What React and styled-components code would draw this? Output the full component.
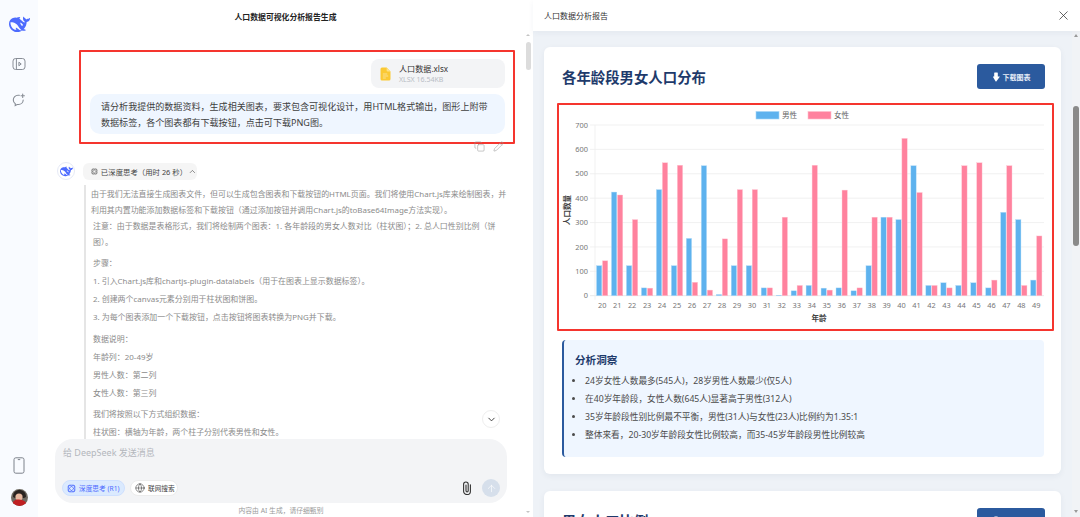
import React from "react";
import styled, { createGlobalStyle } from "styled-components";
import { Copy, Pencil, X, Globe, ArrowUp, ChevronUp, ChevronDown } from "lucide-react";

const Global = createGlobalStyle`
  html, body { margin: 0; padding: 0; height: 100%; overflow: hidden; background: #fff; }
  #root { height: 100%; }
  * { box-sizing: border-box; }
  body { font-family: "Noto Sans", "Noto Sans CJK SC", sans-serif; }
`;

const Page = styled.div`display: flex; width: 1080px; height: 517px; overflow: hidden; background: #fff;`;
const Sidebar = styled.aside`
  flex: 0 0 38px; height: 100%; background: #f9fbff; display: flex; flex-direction: column;
  align-items: center; justify-content: space-between; padding: 14px 0 11px;
`;
const SideGroup = styled.div`display: flex; flex-direction: column; align-items: center; gap: ${p => p.$gap}px;`;
const LeftPane = styled.section`flex: 0 0 495px; height: 100%; display: flex; flex-direction: column; position: relative;`;
const ChatTitle = styled.header`flex: 0 0 32px; display: flex; align-items: center; justify-content: center; font-size: 7.85px; font-weight: 700; color: #222;`;
const Thread = styled.div`flex: 1; min-height: 0; overflow: hidden; padding-top: 18px; position: relative;`;
const RedBox = styled.div`border: 2px solid #f5352e; border-radius: 1px;`;
const UserBlock = styled(RedBox)`
  margin-left: 41px; width: 436px; height: 94px; padding: 7px 8px 8px; display: flex; flex-direction: column; align-items: flex-end; gap: 6px;
`;
const FileChip = styled.div`width: 134px; height: 29px; background: #f3f4f6; border-radius: 8px; display: flex; align-items: center; padding-left: 9px; gap: 8px;`;
const FileMeta = styled.div`display: flex; flex-direction: column; gap: 1px;`;
const FileName = styled.span`font-size: 8.1px; line-height: 11px; color: #333;`;
const FileSize = styled.span`font-size: 7px; line-height: 9px; color: #b8bcc4;`;
const Bubble = styled.div`width: 415px; height: 40px; background: #eff6ff; border-radius: 10px; padding: 5px 14px 0 11px; font-size: 9.05px; line-height: 16px; color: #404040;`;
const Actions = styled.div`display: flex; justify-content: flex-end; gap: 8px; height: 11px; margin-top: -3px; width: 466px; color: #999;`;
const ReplyHead = styled.div`display: flex; align-items: center; gap: 8px; margin: 10px 0 0 19px;`;
const BotAvatar = styled.div`width: 18px; height: 18px; border-radius: 50%; border: 1px solid #e6eaf6; display: flex; align-items: center; justify-content: center; background: #fff;`;
const ThinkChip = styled.div`width: 114px; height: 17px; border-radius: 6px; background: #f5f5f5; display: flex; align-items: center; padding-left: 8px; gap: 3px; font-size: 7.4px; color: #444;`;
const Thoughts = styled.div`margin: 5px 0 0 46px; width: 424px; border-left: 2px solid #e5e5e5; padding: 1px 0 0 5px;`;
const Para = styled.p`margin: ${p => p.$gap || 0}px ${p => p.$end || 0}px 0 ${p => p.$indent || 0}px; font-size: 7.95px; line-height: 16px; color: #8b8b8b;`;
const JumpButton = styled.button`
  position: absolute; right: 33px; top: 378px; width: 18px; height: 18px; border-radius: 50%; border: 1px solid #eee;
  background: #fff; display: flex; align-items: center; justify-content: center; padding: 0; color: #333;
`;
const ScrollThumb = styled.div`position: absolute; right: 2px; top: 42px; width: 5px; height: 28px; border-radius: 3px; background: #dcdcdc;`;
const ScrollArrowTop = styled.div`
  position: absolute; right: 3px; top: 34px; width: 0; height: 0;
  border-left: 2px solid transparent; border-right: 2px solid transparent; border-bottom: 2px solid #c4c4c4;
`;
const ScrollArrowBottom = styled.div`
  position: absolute; right: 3px; top: 511px; width: 0; height: 0;
  border-left: 2px solid transparent; border-right: 2px solid transparent; border-top: 2px solid #c4c4c4;
`;
const Composer = styled.div`flex: 0 0 64px; margin: 0 26px 0 17px; border-radius: 18px; background: #f3f4f6; display: flex; flex-direction: column; justify-content: space-between; padding: 7px 7px 6px 7px;`;
const Placeholder = styled.div`font-size: 9px; line-height: 14px; color: #b4b7bd; padding-left: 1px;`;
const ComposerBar = styled.div`display: flex; align-items: center; gap: 5px;`;
const ModeChip = styled.div`
  height: 16px; width: ${p => p.$w}px; border-radius: 8px; display: flex; align-items: center; gap: 3px; padding-left: 4px; font-size: 6.7px;
  border: 1px solid ${p => p.$on ? "#cfe0ff" : "#ececec"}; background: ${p => p.$on ? "#dbeafe" : "#fff"}; color: ${p => p.$on ? "#4d6bfe" : "#444"};
`;
const Spacer = styled.div`flex: 1;`;
const SendButton = styled.div`width: 18px; height: 18px; border-radius: 50%; background: #d6dfeb; display: flex; align-items: center; justify-content: center; color: #fff; margin-left: 5px;`;
const Disclaimer = styled.footer`flex: 0 0 14px; display: flex; align-items: center; justify-content: center; font-size: 6.8px; color: #9a9a9a; margin-right: 9px;`;

const RightPane = styled.section`flex: 1; height: 100%; display: flex; flex-direction: column; min-width: 0;`;
const PanelHead = styled.header`
  flex: 0 0 31px; background: #fff; display: flex; align-items: center; justify-content: space-between; padding: 0 9px 0 11px;
  font-size: 8px; color: #333; box-shadow: 0 2px 6px rgba(30,50,90,.05); position: relative; z-index: 1;
`;
const PanelBody = styled.div`flex: 1; min-height: 0; display: flex;`;
const Report = styled.div`flex: 1; min-width: 0; background: #eef2f7; padding: 16px 11px 0; overflow: hidden;`;
const Card = styled.article`
  background: #fff; border-radius: 6px; padding: 17px 16px 17px 18px; box-shadow: 0 2px 6px rgba(30,50,90,.06);
  & + & { margin-top: 17px; }
`;
const CardHead = styled.div`display: flex; align-items: center; justify-content: space-between; height: 25px;`;
const CardTitle = styled.h2`margin: 0; padding-top: 2px; font-size: 14.4px; line-height: 25px; font-weight: 700; color: #1e3a6b;`;
const DownloadButton = styled.button`
  width: 68px; height: 25px; background: #2b5a9e; border: 0; border-radius: 3px; color: #e8eef8; font-family: inherit; font-size: 7px; font-weight: 700;
  display: flex; align-items: center; justify-content: center; gap: 3px; padding: 0;
`;
const ChartFrame = styled(RedBox)`margin: 14px -9px 0 -5px; height: 228px;`;
const ChartSvg = styled.svg`display: block;`;
const YTick = styled.text`font-size: 7.4px; fill: #777; text-anchor: end;`;
const XTick = styled.text`font-size: 7.4px; fill: #777; text-anchor: middle;`;
const AxisName = styled.text`font-size: 7.6px; font-weight: 700; fill: #444; text-anchor: middle;`;
const LegendText = styled.text`font-size: 7.6px; fill: #666;`;
const Insights = styled.div`margin: 9px 1px 0 0; height: 117px; background: #eff6ff; border-left: 2px solid #2b5a9e; border-radius: 4px; padding: 12px 11px 0 11px;`;
const InsightTitle = styled.h3`margin: 0; font-size: 10.6px; line-height: 16px; font-weight: 700; color: #1e3a6b;`;
const InsightList = styled.ul`margin: 4px 0 0; padding: 0 0 0 10px; font-size: 8.7px; line-height: 18px; color: #4a4a4a;`;
const Track = styled.div`flex: 0 0 8px; background: #f1f3f6; padding: 3px 0 4px; display: flex; flex-direction: column; align-items: center;`;
const TrackUp = styled.div`width: 0; height: 0; border-left: 2.5px solid transparent; border-right: 2.5px solid transparent; border-bottom: 3px solid #9a9a9a;`;
const TrackDown = styled.div`margin-top: auto; width: 0; height: 0; border-left: 2.5px solid transparent; border-right: 2.5px solid transparent; border-top: 3px solid #9a9a9a;`;
const Thumb = styled.div`width: 6px; height: 140px; margin-top: 69px; border-radius: 3px; background: #8a8a8a;`;

const male = [123,425,123,32,435,123,235,533,5,123,123,32,2,20,42,31,32,20,123,322,312,533,42,53,42,53,32,342,312,64];
const female = [143,413,312,31,545,535,55,23,233,435,435,32,322,42,535,23,433,32,322,322,645,423,42,32,533,545,64,533,42,245];
const X0 = 36, CW = 14.97, Y0 = 190.7, K = 170.7 / 700;

const Whale = ({ size, color = "#4d6bfe" }) => (
  <svg width={size} height={size} viewBox="0 0 24 24" fill={color}>
    <path d="M23.748 4.482c-.254-.124-.364.113-.512.234-.051.039-.094.09-.137.136-.372.397-.806.657-1.373.626-.829-.046-1.537.214-2.163.848-.133-.782-.575-1.248-1.247-1.548-.352-.156-.708-.311-.955-.65-.172-.241-.219-.51-.305-.774-.055-.16-.11-.323-.293-.35-.2-.031-.278.136-.356.276-.313.572-.434 1.202-.422 1.84.027 1.436.633 2.58 1.838 3.393.137.093.172.187.129.323-.082.28-.18.552-.266.833-.055.179-.137.217-.329.14a5.526 5.526 0 01-1.736-1.18c-.857-.828-1.631-1.742-2.597-2.458a11.365 11.365 0 00-.689-.471c-.985-.957.13-1.743.388-1.836.27-.098.093-.432-.779-.428-.872.004-1.67.295-2.687.684a3.055 3.055 0 01-.465.137 9.597 9.597 0 00-2.883-.102c-1.885.21-3.39 1.102-4.497 2.623C.082 8.606-.231 10.684.152 12.85c.403 2.284 1.569 4.175 3.36 5.653 1.858 1.533 3.997 2.284 6.438 2.14 1.482-.085 3.133-.284 4.994-1.86.47.234.962.327 1.78.397.63.059 1.236-.03 1.705-.128.735-.156.684-.837.419-.961-2.155-1.004-1.682-.595-2.113-.926 1.096-1.296 2.746-2.642 3.392-7.003.05-.347.007-.565 0-.845-.004-.17.035-.237.23-.256a4.173 4.173 0 001.545-.475c1.396-.763 1.96-2.015 2.093-3.517.02-.23-.004-.467-.247-.588zM11.581 18c-2.089-1.642-3.102-2.183-3.52-2.16-.392.024-.321.471-.235.763.09.288.207.486.371.739.114.167.192.416-.113.603-.673.416-1.842-.14-1.897-.167-1.361-.802-2.5-1.86-3.301-3.307-.774-1.393-1.224-2.887-1.298-4.482-.02-.386.093-.522.477-.592a4.696 4.696 0 011.529-.039c2.132.312 3.946 1.265 5.468 2.774.868.86 1.525 1.887 2.202 2.891.72 1.066 1.494 2.082 2.48 2.914.348.292.625.514.891.677-.802.09-2.14.11-3.054-.614zm1-6.44a.306.306 0 01.415-.287.302.302 0 01.2.288.306.306 0 01-.31.307.303.303 0 01-.304-.308zm3.11 1.596c-.2.081-.399.151-.59.16a1.245 1.245 0 01-.798-.254c-.274-.23-.47-.358-.552-.758a1.73 1.73 0 01.016-.588c.07-.327-.008-.537-.239-.727-.187-.156-.426-.199-.688-.199a.559.559 0 01-.254-.078c-.11-.054-.2-.19-.114-.358.028-.054.16-.186.192-.21.356-.202.767-.136 1.146.016.352.144.618.408 1.001.782.391.451.462.576.685.914.176.265.336.537.445.848.067.195-.019.354-.25.452z" />
  </svg>
);

const PanelIcon = () => (
  <svg width="14" height="14" viewBox="0 0 14 14" fill="none" stroke="#888d96" strokeWidth="1">
    <rect x="1" y="1.500" width="12" height="11" rx="2.600" />
    <path d="M4.400 1.500v11" />
    <path d="M6.900 5.200 9.200 7 6.900 8.800z" />
  </svg>
);
const NewChatIcon = () => (
  <svg width="14" height="14" viewBox="0 0 14 14" fill="none" stroke="#888d96" strokeWidth="1.100" strokeLinecap="round">
    <path d="M7.400 2.200H6a4.700 4.700 0 0 0-4.700 4.700c0 1.600.8 3 2 3.800l-.1 1.800 2-1h1.300a4.700 4.700 0 0 0 4.700-4.500" />
    <path d="M10.700 1v3.400M9 2.700h3.400" />
  </svg>
);
const PhoneIcon = () => (
  <svg width="12" height="17" viewBox="0 0 12 17" fill="none" stroke="#7d828b" strokeWidth="1">
    <rect x="1" y=".8" width="10" height="15.400" rx="1.800" />
    <path d="M5.200 2.600h1.600" strokeLinecap="round" />
  </svg>
);
const ClipIcon = () => (
  <svg width="10" height="14" viewBox="0 0 10 14" fill="none" stroke="#333" strokeWidth="1.100" strokeLinecap="round">
    <path d="M8.400 3.800v6.400a3.400 3.400 0 0 1-6.800 0V3.300a2.300 2.300 0 0 1 4.600 0v6.500a1.100 1.100 0 0 1-2.200 0V4" />
  </svg>
);
const UserAvatar = () => (
  <svg width="17" height="17" viewBox="0 0 17 17">
    <clipPath id="avatarClip"><circle cx="8.500" cy="8.500" r="8.500" /></clipPath>
    <g clipPath="url(#avatarClip)">
      <rect width="17" height="17" fill="#6f6a62" />
      <path d="M2 8C2 3 5 1 8.500 1S15 3 15 8l-2 1H4z" fill="#2a2320" />
      <ellipse cx="8" cy="8" rx="3.600" ry="3.600" fill="#e8b9a0" />
      <path d="M1 17c.4-5 3-7 7-6.500S15.600 12 16 17z" fill="#c01f22" />
    </g>
  </svg>
);
const FileIcon = () => (
  <svg width="11" height="14" viewBox="0 0 11 14">
    <path d="M2 .5h4.600L10.500 4.400V12a1.500 1.500 0 0 1-1.500 1.500H2A1.500 1.500 0 0 1 .5 12V2A1.500 1.500 0 0 1 2 .5z" fill="#fbc934" />
    <path d="M6.600.5 10.500 4.400H7.600a1 1 0 0 1-1-1z" fill="#fde28a" />
    <path d="M2.800 7h4.500M2.800 9h5.400M2.800 11h3" stroke="#fde9a8" strokeWidth=".8" />
  </svg>
);
const AtomIcon = ({ size, color }) => (
  <svg width={size} height={size} viewBox="0 0 12 12" fill="none" stroke={color} strokeWidth=".9">
    <ellipse cx="6" cy="6" rx="5.300" ry="2.400" transform="rotate(45 6 6)" />
    <ellipse cx="6" cy="6" rx="5.300" ry="2.400" transform="rotate(-45 6 6)" />
    <rect x="1.500" y="1.500" width="9" height="9" rx="2" />
  </svg>
);
const DownArrow = () => (
  <svg width="8" height="10" viewBox="0 0 8 10" fill="#fff">
    <path d="M2.600.5h2.800a.4.4 0 0 1 .4.4v3.600h1.600c.3 0 .5.400.2.600L4.300 9.400a.4.4 0 0 1-.6 0L1 5.100c-.2-.2 0-.6.300-.6h.9V.9a.4.4 0 0 1 .4-.4z" />
  </svg>
);

const Chart = () => (
  <ChartSvg width="493" height="224" viewBox="0 0 493 224">
    <rect x="197" y="6.500" width="23" height="7.500" fill="#5eb2ee" stroke="#a6d6f7" strokeWidth=".6" />
    <LegendText x="223" y="13">男性</LegendText>
    <rect x="249" y="6.500" width="23" height="7.500" fill="#ff829e" stroke="#ffc0ce" strokeWidth=".6" />
    <LegendText x="275" y="13">女性</LegendText>
    {[0,100,200,300,400,500,600,700].map(v => (
      <g key={v}>
        <line x1={X0 - 5} x2={X0 + 449} y1={Y0 - v * K} y2={Y0 - v * K} stroke={v === 0 ? "#e2e2e2" : "#eeeeee"} strokeWidth=".8" />
        <YTick x={X0 - 7} y={Y0 - v * K + 2.600}>{v}</YTick>
      </g>
    ))}
    <line x1={X0} x2={X0} y1={Y0 - 170.7} y2={Y0 + 4} stroke="#eeeeee" strokeWidth=".8" />
    {male.map((m, i) => {
      const x = X0 + i * CW + 1.500;
      const f = female[i];
      return (
        <g key={i}>
          <rect x={x} y={Y0 - m * K} width="5.300" height={m * K} fill="#5eb2ee" stroke="#b5dcf8" strokeWidth=".4" />
          <rect x={x + 6} y={Y0 - f * K} width="5.300" height={f * K} fill="#ff829e" stroke="#ffc6d2" strokeWidth=".4" />
          <XTick x={X0 + i * CW + 7.200} y={Y0 + 12.500}>{20 + i}</XTick>
        </g>
      );
    })}
    <AxisName x="260" y="215.500">年龄</AxisName>
    <AxisName transform="translate(10.500 105) rotate(-90)">人口数量</AxisName>
  </ChartSvg>
);

export default function App() {
  return (
    <Page>
      <Global />
      <Sidebar>
        <SideGroup $gap={22}>
          <Whale size={21} />
          <PanelIcon />
          <NewChatIcon />
        </SideGroup>
        <SideGroup $gap={15}>
          <PhoneIcon />
          <UserAvatar />
        </SideGroup>
      </Sidebar>

      <LeftPane>
        <ChatTitle>人口数据可视化分析报告生成</ChatTitle>
        <Thread>
          <UserBlock>
            <FileChip>
              <FileIcon />
              <FileMeta>
                <FileName>人口数据.xlsx</FileName>
                <FileSize>XLSX 16.54KB</FileSize>
              </FileMeta>
            </FileChip>
            <Bubble>请分析我提供的数据资料，生成相关图表，要求包含可视化设计，用HTML格式输出，图形上附带数据标签，各个图表都有下载按钮，点击可下载PNG图。</Bubble>
          </UserBlock>
          <Actions>
            <Copy size={11} strokeWidth={1.2} />
            <Pencil size={11} strokeWidth={1.2} />
          </Actions>
          <ReplyHead>
            <BotAvatar><Whale size={13} /></BotAvatar>
            <ThinkChip>
              <AtomIcon size={7} color="#666" />
              <span>已深度思考（用时 26 秒）</span>
              <ChevronUp size={9} strokeWidth={1.6} />
            </ThinkChip>
          </ReplyHead>
          <Thoughts>
            <Para>由于我们无法直接生成图表文件，但可以生成包含图表和下载按钮的HTML页面。我们将使用Chart.js库来绘制图表，并利用其内置功能添加数据标签和下载按钮（通过添加按钮并调用Chart.js的toBase64Image方法实现）。</Para>
            <Para $indent={2} $end={7}>注意：由于数据是表格形式，我们将绘制两个图表：1. 各年龄段的男女人数对比（柱状图）；2. 总人口性别比例（饼图）。</Para>
            <Para $gap={5} $indent={2}>步骤：</Para>
            <Para $gap={2} $indent={2}>1. 引入Chart.js库和chartjs-plugin-datalabels（用于在图表上显示数据标签）。</Para>
            <Para $gap={2} $indent={2}>2. 创建两个canvas元素分别用于柱状图和饼图。</Para>
            <Para $gap={2} $indent={2}>3. 为每个图表添加一个下载按钮，点击按钮将图表转换为PNG并下载。</Para>
            <Para $gap={6} $indent={2}>数据说明：</Para>
            <Para $gap={2} $indent={2}>年龄列：20-49岁</Para>
            <Para $gap={2} $indent={2}>男性人数：第二列</Para>
            <Para $gap={2} $indent={2}>女性人数：第三列</Para>
            <Para $gap={5} $indent={2}>我们将按照以下方式组织数据：</Para>
            <Para $gap={2} $indent={2}>柱状图：横轴为年龄，两个柱子分别代表男性和女性。</Para>
          </Thoughts>
          <JumpButton aria-label="scroll down"><ChevronDown size={11} strokeWidth={2} /></JumpButton>
        </Thread>
        <ScrollArrowTop />
        <ScrollThumb />
        <ScrollArrowBottom />
        <Composer>
          <Placeholder>给 DeepSeek 发送消息</Placeholder>
          <ComposerBar>
            <ModeChip $on $w={63}>
              <AtomIcon size={9} color="#4d6bfe" />
              <span>深度思考 (R1)</span>
            </ModeChip>
            <ModeChip $w={48}>
              <Globe size={10} strokeWidth={1.2} color="#222" />
              <span>联网搜索</span>
            </ModeChip>
            <Spacer />
            <ClipIcon />
            <SendButton><ArrowUp size={11} strokeWidth={1.4} /></SendButton>
          </ComposerBar>
        </Composer>
        <Disclaimer>内容由 AI 生成，请仔细甄别</Disclaimer>
      </LeftPane>

      <RightPane>
        <PanelHead>
          <span>人口数据分析报告</span>
          <X size={15} strokeWidth={1.2} color="#333" />
        </PanelHead>
        <PanelBody>
          <Report>
            <Card>
              <CardHead>
                <CardTitle>各年龄段男女人口分布</CardTitle>
                <DownloadButton><DownArrow />下载图表</DownloadButton>
              </CardHead>
              <ChartFrame><Chart /></ChartFrame>
              <Insights>
                <InsightTitle>分析洞察</InsightTitle>
                <InsightList>
                  <li>24岁女性人数最多(545人)，28岁男性人数最少(仅5人)</li>
                  <li>在40岁年龄段，女性人数(645人)显著高于男性(312人)</li>
                  <li>35岁年龄段性别比例最不平衡，男性(31人)与女性(23人)比例约为1.35:1</li>
                  <li>整体来看，20-30岁年龄段女性比例较高，而35-45岁年龄段男性比例较高</li>
                </InsightList>
              </Insights>
            </Card>
            <Card>
              <CardHead>
                <CardTitle>男女人口比例</CardTitle>
                <DownloadButton><DownArrow />下载图表</DownloadButton>
              </CardHead>
            </Card>
          </Report>
          <Track><TrackUp /><Thumb /><TrackDown /></Track>
        </PanelBody>
      </RightPane>
    </Page>
  );
}
